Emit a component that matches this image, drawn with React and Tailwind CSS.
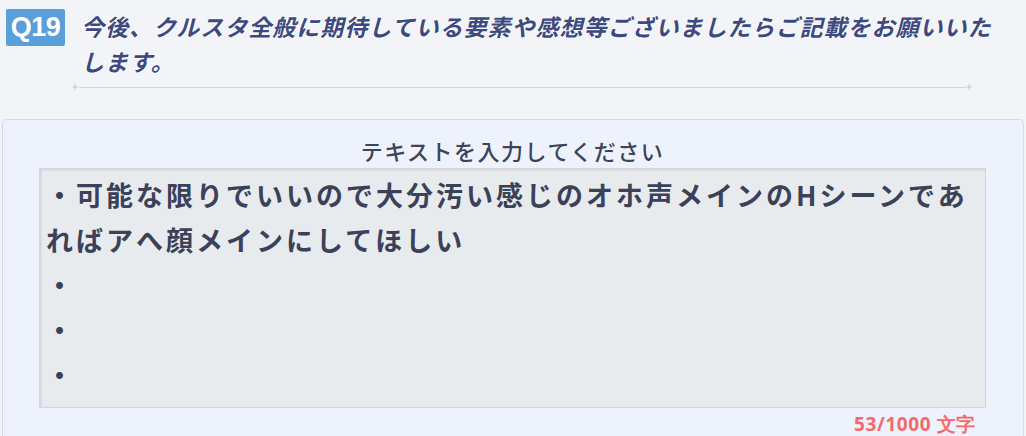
const answer =
  '・可能な限りでいいので大分汚い感じのオホ声メインのHシーンであればアへ顔メインにしてほしい\n・\n・\n・';

function Sparkle() {
  return (
    <svg width="8" height="8" viewBox="0 0 8 8" className="shrink-0">
      <path d="M4 0 L4.8 3.2 L8 4 L4.8 4.8 L4 8 L3.2 4.8 L0 4 L3.2 3.2 Z" fill="#c9cbdc" />
    </svg>
  );
}

export default function App() {
  return (
    <div className="h-[436px] overflow-hidden bg-[#f3f4f8] font-['Noto_Sans_CJK_JP',sans-serif]">
      {/* Question header */}
      <div className="flex items-start pl-[6px] pt-[9px]">
        <div className="flex h-[37px] w-[59px] shrink-0 items-center justify-center rounded-[2px] bg-[#5a9fd9] font-['Liberation_Sans',sans-serif] text-[27px] font-bold leading-none tracking-[-0.5px] text-white">
          Q19
        </div>
        <h2 className="ml-[16px] w-[922px] text-[23px] font-bold italic leading-[35px] tracking-[1px] text-[#3c4a80] [text-shadow:0_0_2px_#fff,0_0_2px_#fff,0_0_1px_#fff]">
          今後、クルスタ全般に期待している要素や感想等ございましたらご記載をお願いいたします。
        </h2>
      </div>

      {/* Divider */}
      <div className="ml-[71px] mt-[4px] flex w-[902px] items-center">
        <Sparkle />
        <div className="h-px flex-1 bg-[#d2d3e2]" />
        <Sparkle />
      </div>

      {/* Answer panel */}
      <div className="mx-[2px] mt-[28px] h-[340px] rounded-t-[5px] border border-b-0 border-[#d6d9ee] bg-[#eef2fd] pl-[36px] pr-[37px] pt-[16px]">
        <div className="text-center text-[22px] font-medium leading-[28px] tracking-[1.5px] text-[#3e4357]">
          テキストを入力してください
        </div>
        <div className="mt-[4px] h-[240px] whitespace-pre-wrap border border-[#d3d6db] bg-[#e8ebee] pl-[6px] pr-[6px] pt-[3px] text-[27px] font-bold leading-[45px] tracking-[3px] text-[#3b4159] shadow-[inset_1px_1px_2px_rgba(0,0,0,0.12)]">
          {answer}
        </div>
        <div className="mr-[10px] mt-[6px] text-right font-['Open_Sans',sans-serif] text-[19px] font-bold leading-[20px] tracking-[0.6px] text-[#f36a6a]">
          53/1000 文字
        </div>
      </div>
    </div>
  );
}
